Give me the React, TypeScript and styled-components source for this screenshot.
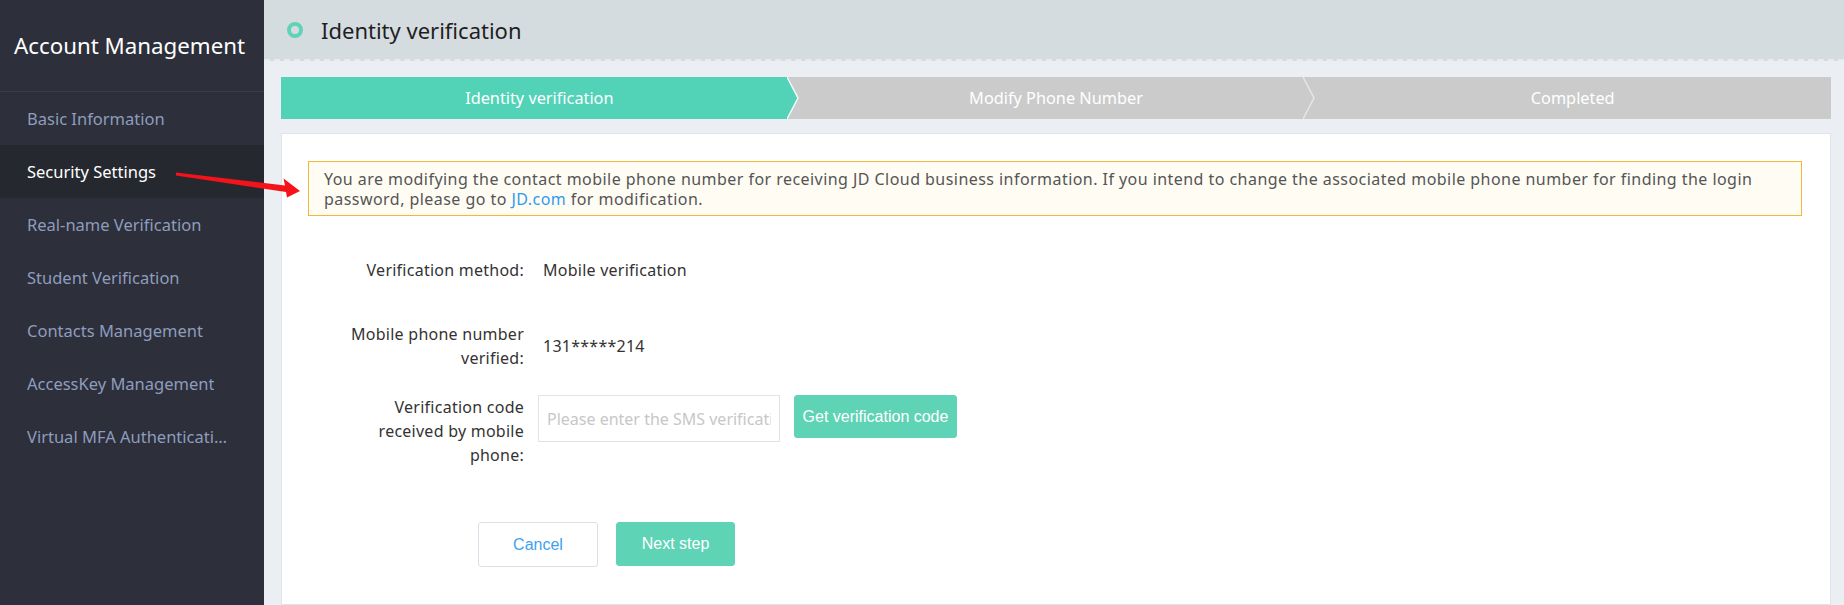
import React from "react";
import styled, { createGlobalStyle } from "styled-components";

const GlobalStyle = createGlobalStyle`
  html, body { margin: 0; padding: 0; }
  body {
    font-family: "Noto Sans", "Open Sans", Arial, sans-serif;
    background: #ebeff3;
  }
  * { box-sizing: border-box; }
`;

const Page = styled.div`
  position: relative;
  display: flex;
  width: 1844px;
  height: 605px;
  overflow: hidden;
`;

const Sidebar = styled.aside`
  width: 264px;
  flex: none;
  background: #2d2f3b;
  display: flex;
  flex-direction: column;
`;

const SideTitle = styled.div`
  height: 92px;
  display: flex;
  align-items: center;
  padding-left: 14px;
  color: #ffffff;
  font-size: 22.3px;
  border-bottom: 1px solid #393b47;
`;

const MenuItem = styled.div<{ $active?: boolean }>`
  height: 53px;
  display: flex;
  align-items: center;
  padding: 0 36px 0 27px;
  font-size: 16.5px;
  color: ${(p) => (p.$active ? "#ffffff" : "#8e9dbd")};
  background: ${(p) => (p.$active ? "#262830" : "transparent")};
`;

const MenuText = styled.span`
  display: block;
  white-space: nowrap;
  overflow: hidden;
  text-overflow: ellipsis;
`;

const Main = styled.main`
  flex: 1;
  display: flex;
  flex-direction: column;
  background: #ebeff3;
`;

const Header = styled.header`
  height: 61px;
  flex: none;
  display: flex;
  align-items: center;
  gap: 18px;
  padding-left: 23px;
  background: #d5dce0;
  border-bottom: 2px dashed #e7ebee;
`;

const Dot = styled.span`
  width: 16px;
  height: 16px;
  border-radius: 50%;
  border: 4px solid #5fd3b5;
`;

const HeaderTitle = styled.h1`
  margin: 0;
  font-size: 22px;
  font-weight: 400;
  color: #1f1f1f;
`;

const Body = styled.div`
  flex: 1;
  display: flex;
  flex-direction: column;
  gap: 14px;
  padding: 16px 13px 0 17px;
`;

const Steps = styled.div`
  display: flex;
  height: 42px;
  background: #cbcbcb;
`;

const StepCell = styled.div`
  position: relative;
  flex: 1;
  display: flex;
`;

const Step = styled.div<{ $done?: boolean }>`
  flex: 1;
  display: flex;
  align-items: center;
  justify-content: center;
  color: #ffffff;
  font-size: 16.3px;
  background: ${(p) => (p.$done ? "#52d3b7" : "transparent")};
  clip-path: ${(p) =>
    p.$done
      ? "polygon(0 0, calc(100% - 10px) 0, 100% 50%, calc(100% - 10px) 100%, 0 100%)"
      : "none"};
`;

const Chevron = styled.svg`
  position: absolute;
  top: 0;
  right: -3px;
  width: 14px;
  height: 42px;
  z-index: 1;
`;

const Panel = styled.section`
  flex: 1;
  background: #ffffff;
  border: 1px solid #dde4ea;
  padding: 27px 28px 0 26px;
`;

const Notice = styled.div`
  border: 1px solid #f4b73a;
  background: #fffcf4;
  padding: 7px 15px 6px;
  font-size: 16px;
  letter-spacing: 0.45px;
  line-height: 20px;
  color: #555555;
`;

const Link = styled.a`
  color: #2f9bf0;
  text-decoration: none;
`;

const Form = styled.div`
  display: flex;
  flex-direction: column;
`;

const Row = styled.div<{ $mt: number; $align?: string }>`
  display: flex;
  align-items: ${(p) => p.$align || "center"};
  gap: 14px;
  margin-top: ${(p) => p.$mt}px;
`;

const Label = styled.div`
  width: 216px;
  flex: none;
  text-align: right;
  font-size: 16px;
  letter-spacing: 0.25px;
  line-height: 24px;
  color: #333333;
`;

const Value = styled.div`
  padding-left: 5px;
  font-size: 16px;
  letter-spacing: 0.25px;
  line-height: 24px;
  color: #333333;
`;

const Input = styled.input`
  width: 242px;
  height: 47px;
  border: 1px solid #e3e3e3;
  padding: 0 8px;
  font-family: "Noto Sans", Arial, sans-serif;
  font-size: 16px;
  color: #333;
  outline: none;
  &::placeholder { color: #c7c7c7; }
`;

const Button = styled.button<{ $variant?: "primary" | "ghost"; $w: number; $h: number }>`
  width: ${(p) => p.$w}px;
  height: ${(p) => p.$h}px;
  border-radius: 3px;
  font-family: "Liberation Sans", Arial, sans-serif;
  font-size: 16px;
  cursor: pointer;
  border: 1px solid ${(p) => (p.$variant === "ghost" ? "#d8e1ea" : "#5fd3b5")};
  background: ${(p) => (p.$variant === "ghost" ? "#ffffff" : "#5fd3b5")};
  color: ${(p) => (p.$variant === "ghost" ? "#3f9ff0" : "#ffffff")};
  padding: 0;
`;

const Actions = styled.div`
  display: flex;
  gap: 18px;
  margin-top: 55px;
  padding-left: 170px;
`;

const Arrow = styled.svg`
  position: absolute;
  left: 170px;
  top: 165px;
  width: 140px;
  height: 40px;
  pointer-events: none;
`;

const menu = [
  "Basic Information",
  "Security Settings",
  "Real-name Verification",
  "Student Verification",
  "Contacts Management",
  "AccessKey Management",
  "Virtual MFA Authentication",
];

const steps = ["Identity verification", "Modify Phone Number", "Completed"];

export default function App() {
  return (
    <>
      <GlobalStyle />
      <Page>
        <Sidebar>
          <SideTitle>Account Management</SideTitle>
          {menu.map((m) => (
            <MenuItem key={m} $active={m === "Security Settings"}>
              <MenuText>{m}</MenuText>
            </MenuItem>
          ))}
        </Sidebar>
        <Main>
          <Header>
            <Dot />
            <HeaderTitle>Identity verification</HeaderTitle>
          </Header>
          <Body>
            <Steps>
              {steps.map((s, i) => (
                <StepCell key={s}>
                  <Step $done={i === 0}>{s}</Step>
                  {i < steps.length - 1 && (
                    <Chevron viewBox="0 0 14 42">
                      <polyline
                        points="0,0 11,21 0,42"
                        fill="none"
                        stroke={i === 0 ? "#f4fbf9" : "#e6e6e6"}
                        strokeWidth="1.5"
                      />
                    </Chevron>
                  )}
                </StepCell>
              ))}
            </Steps>
            <Panel>
              <Notice>
                You are modifying the contact mobile phone number for receiving JD Cloud business
                information. If you intend to change the associated mobile phone number for finding the
                login password, please go to <Link href="#">JD.com</Link> for modification.
              </Notice>
              <Form>
                <Row $mt={42}>
                  <Label>Verification method:</Label>
                  <Value>Mobile verification</Value>
                </Row>
                <Row $mt={40}>
                  <Label>
                    Mobile phone number
                    <br />
                    verified:
                  </Label>
                  <Value>131*****214</Value>
                </Row>
                <Row $mt={25} $align="flex-start">
                  <Label>
                    Verification code
                    <br />
                    received by mobile
                    <br />
                    phone:
                  </Label>
                  <Input placeholder="Please enter the SMS verification code" />
                  <Button $w={163} $h={43}>Get verification code</Button>
                </Row>
                <Actions>
                  <Button $variant="ghost" $w={120} $h={45}>Cancel</Button>
                  <Button $w={119} $h={44}>Next step</Button>
                </Actions>
              </Form>
            </Panel>
          </Body>
        </Main>
        <Arrow viewBox="0 0 140 40">
          <polygon points="6,7.5 115,20.5 113.5,13.5 130,26 117,32.5 116,27 6,10.5" fill="#f5131a" />
        </Arrow>
      </Page>
    </>
  );
}
